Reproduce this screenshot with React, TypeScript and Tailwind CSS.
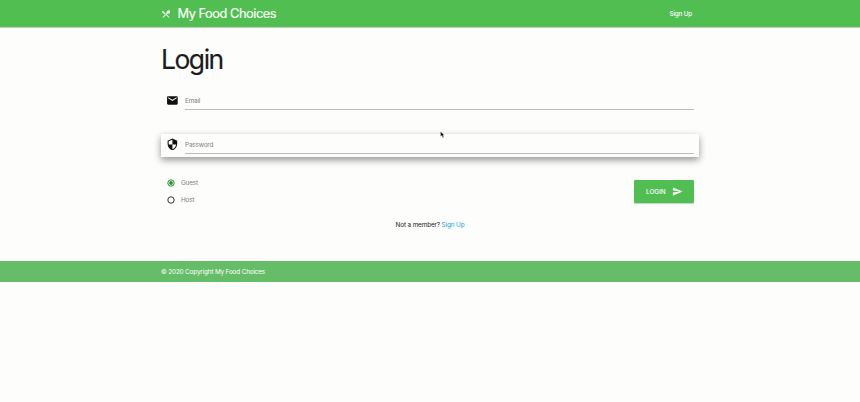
import type { ReactNode } from "react";
import { MdEmail, MdRestaurantMenu, MdSecurity, MdSend } from "react-icons/md";

function Field({ icon, label, active }: { icon: ReactNode; label: string; active?: boolean }) {
  return (
    <div
      className={
        "flex h-[23px] pl-[5px] pr-[5px] " +
        (active ? "bg-[#fdfefc] shadow-[0_3px_7px_0px_rgba(0,0,0,0.42)]" : "")
      }
    >
      <div className="mt-[3.5px] w-[18.5px] shrink-0 text-[12.8px] text-[#111]">{icon}</div>
      <div className="h-[20px] grow border-b border-[#bbbdbb] pt-[6px] text-[6.4px] leading-[10px] tracking-[-0.18px] text-[#808080]">
        <span className="ml-[0.5px]">{label}</span>
      </div>
    </div>
  );
}

function Choice({ label, checked }: { label: string; checked?: boolean }) {
  return (
    <label className="flex h-[17px] items-center">
      <svg
        viewBox="0 0 8 8"
        className={"size-[8px] " + (checked ? "text-[#2a922f]" : "text-[#333]")}
      >
        <circle cx="4" cy="4" r="3.2" fill="none" stroke="currentColor" strokeWidth="1" />
        {checked && <circle cx="4" cy="4" r="1.9" fill="currentColor" />}
      </svg>
      <span className="ml-[6px] pt-[0.5px] text-[6.4px] leading-[10px] tracking-[-0.15px] text-[#808080]">{label}</span>
    </label>
  );
}

export default function App() {
  return (
    <div className="h-[402px] overflow-hidden bg-[#fdfefc] font-['Inter','Liberation_Sans',sans-serif] text-[6.4px] leading-[10px] tracking-[-0.14px] text-[#1b1b1b]">
      <header className="h-[27px] bg-[#50be50] text-white shadow-[0_1px_1px_rgba(0,0,0,0.2)]">
        <div className="mx-auto flex h-full w-[538px] items-center">
          <MdRestaurantMenu className="size-[10px]" />
          <span className="ml-[6.5px] text-[12.8px] leading-[27px] tracking-[-0.46px] [-webkit-text-stroke:0.15px_white]">My Food Choices</span>
          <span className="ml-auto mr-[7px] pt-px font-medium tracking-[-0.2px]">Sign Up</span>
        </div>
      </header>
      <main className="mx-auto h-[234px] w-[538px]">
        <h1 className="pt-[17px] text-[26.5px] leading-[31px] tracking-[-1.5px] [-webkit-text-stroke:0.15px_#1b1b1b]">Login</h1>
        <div className="mt-[15px]">
          <Field icon={<MdEmail />} label="Email" />
          <div className="h-[21px]" />
          <Field icon={<MdSecurity />} label="Password" active />
        </div>
        <div className="mt-[18px] flex h-[34px] justify-between px-[5px]">
          <div className="-mt-[0.5px] pl-[1px]">
            <Choice label="Guest" checked />
            <Choice label="Host" />
          </div>
          <button className="mt-[5px] flex h-[23px] w-[60px] items-center rounded-[1px] bg-[#50be50] pl-3 text-[6.4px] font-medium tracking-[-0.05px] text-white shadow-[0_1px_1px_rgba(0,0,0,0.2)]">
            LOGIN
            <MdSend className="ml-[7px] size-[11px]" />
          </button>
        </div>
        <p className="mt-[11px] text-center">
          Not a member? <a className="text-[#139fda]">Sign Up</a>
        </p>
      </main>
      <footer className="h-[21px] bg-[#65bd67] text-white">
        <div className="mx-auto w-[538px] leading-[22px] tracking-[-0.17px]">© 2020 Copyright My Food Choices</div>
      </footer>
      <svg className="absolute left-[440px] top-[131px]" width="5" height="8" viewBox="0 0 5 8">
        <path d="M.5.5v5l1.3-1 1 2.3 1-.5-1-2.1h1.6z" fill="#111" stroke="#fff" strokeWidth=".3" />
      </svg>
    </div>
  );
}
